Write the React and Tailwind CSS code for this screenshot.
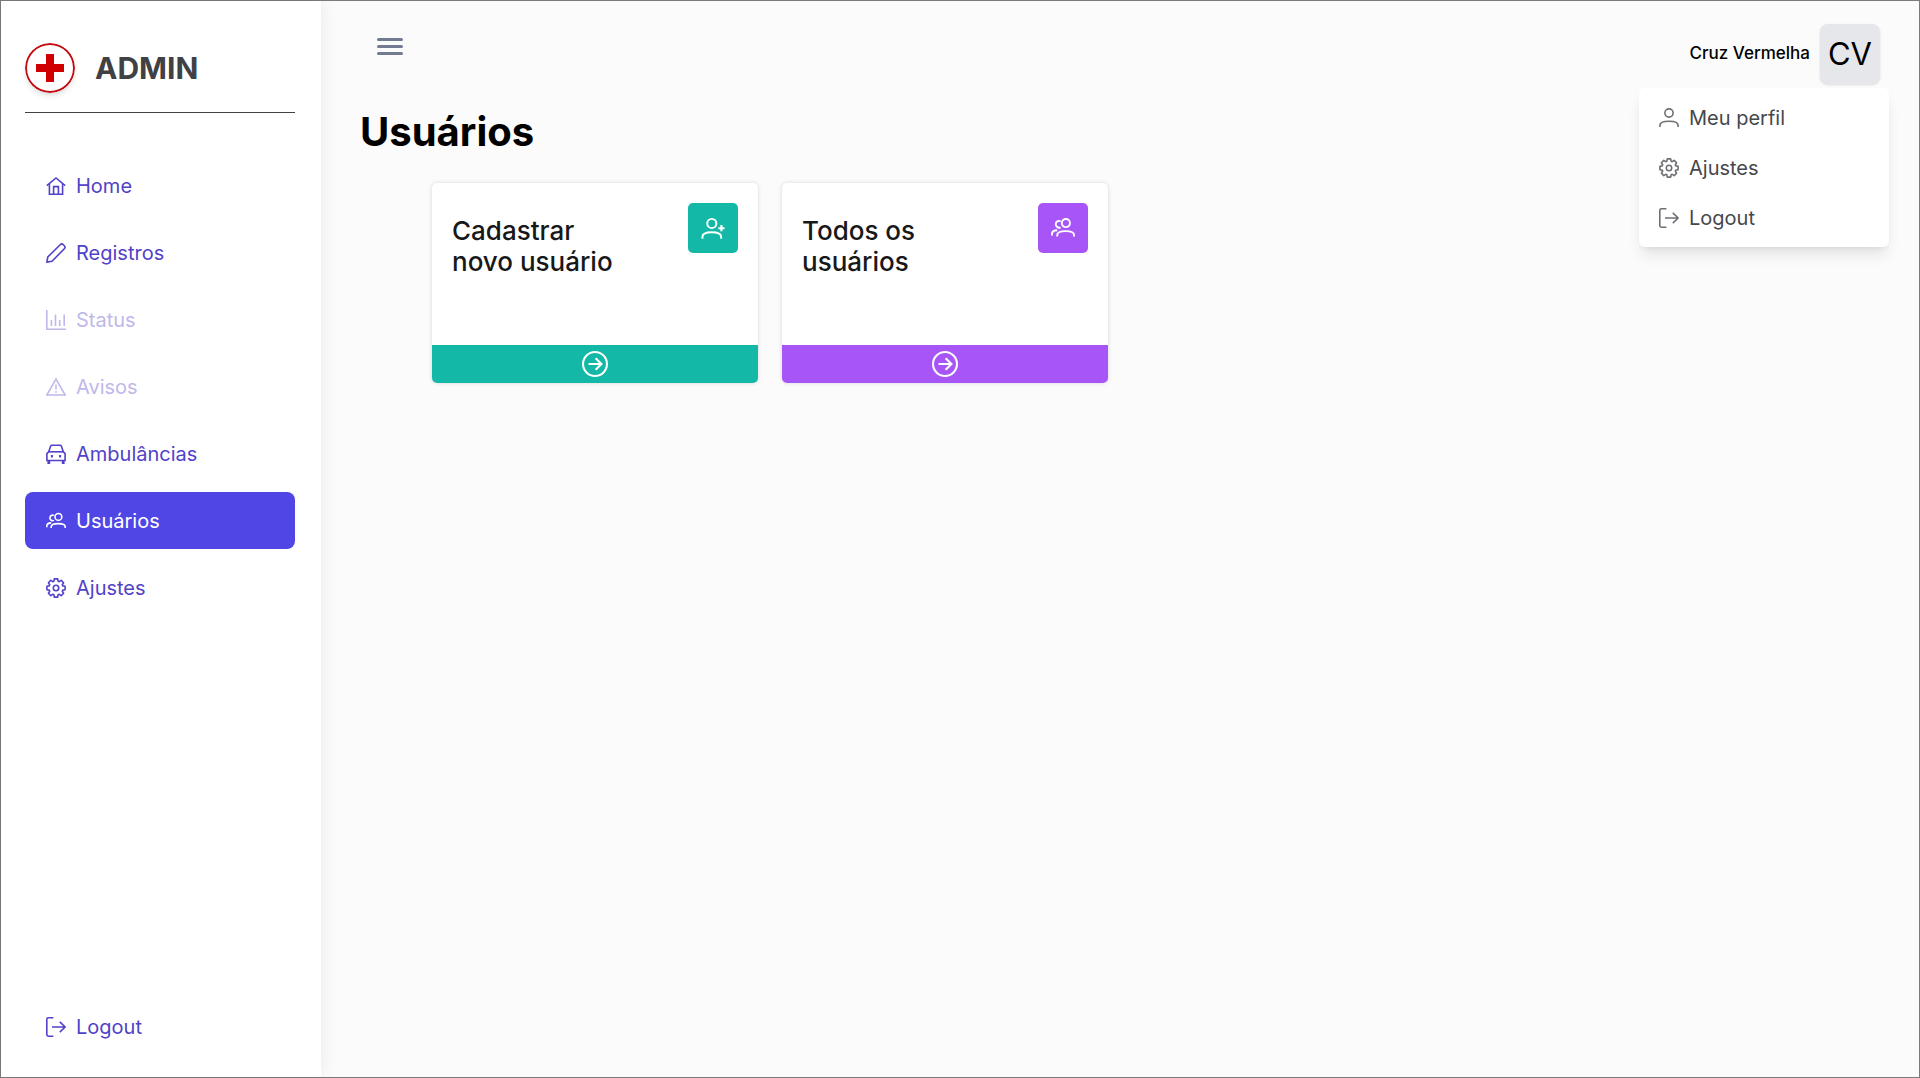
import React from "react";

const PATHS = {
  home: (
    <>
      <path d="M.8 9.600 10 2 19.200 9.600" />
      <path d="M3.4 8V18.200H16.600V8" />
      <path d="M7.600 18V10.600H12.400V18" />
    </>
  ),
  pencil: <path d="M14.200 1.700a2.200 2.200 0 0 1 3.100 0l1 1a2.200 2.200 0 0 1 0 3.100L6 18.200.9 19.100 1.800 14z" />,
  chart: (
    <>
      <path d="M.8 0V19.200H20" />
      <path d="M5.400 16V10M9.500 16V4.600M13.700 16V10M18.200 16V4.600" />
    </>
  ),
  warning: (
    <>
      <path d="M10 2.200 19.200 18H.8z" />
      <path d="M10 7.600V12.600M10 14.200V15.800" />
    </>
  ),
  car: (
    <>
      <path d="M.9 16.500V9.600L2.700 7.800 4.700 2Q4.900 1.300 5.700 1.300H14.300Q15.100 1.300 15.300 2L17.300 7.800 19.100 9.600V16.500z" />
      <path d="M2.700 7.800H17.300" />
      <path d="M2.800 16.500V20M17.200 16.500V20" strokeWidth="2.800" />
      <path d="M4.900 12.300H6.900M13.100 12.300H15.100" strokeWidth="2.400" />
    </>
  ),
  users: (
    <>
      <circle cx="12.400" cy="5.900" r="3.400" />
      <path d="M8 4.400A2.800 2.800 0 1 0 8 9.400" />
      <path d="M5.200 17V15.800C5.200 13.400 8 12.600 12.200 12.600S19.200 13.400 19.200 15.800V17" />
      <path d="M.8 16.200V15.200C.8 13 2.300 11.900 5.200 11.900" />
    </>
  ),
  user: (
    <>
      <circle cx="10" cy="5" r="4.100" />
      <path d="M.9 19V17.400C.9 14.400 4 13.200 10 13.200S19.100 14.400 19.100 17.400V19" />
    </>
  ),
  userPlus: (
    <>
      <circle cx="9" cy="6.200" r="3.800" />
      <path d="M1.200 19V17.400C1.200 14.600 4 13.600 9 13.600S16.800 14.600 16.800 17.400V19" />
      <path d="M17 7.600V12.800M14.400 10.200H19.600" strokeWidth="1.800" />
    </>
  ),
  gear: (
    <>
      <path
        strokeLinejoin="round"
        d="M8.300.9h3.400l.4 2.300 1.200.5 1.900-1.300 2.400 2.400-1.300 1.900.5 1.200 2.300.4v3.400l-2.300.4-.5 1.200 1.300 1.900-2.400 2.400-1.900-1.300-1.200.5-.4 2.300H8.300l-.4-2.300-1.200-.5-1.900 1.300-2.400-2.400 1.300-1.900-.5-1.200-2.300-.4V8.300l2.300-.4.5-1.200-1.300-1.900 2.400-2.400 1.900 1.300 1.200-.5z"
      />
      <circle cx="10" cy="10" r="2.700" />
    </>
  ),
  logout: (
    <>
      <path d="M7.400.8H2.400Q.8.8.8 2.400V17.600Q.8 19.200 2.400 19.200H7.400" />
      <path d="M6 10H19M13.800 4.800 19.200 10 13.800 15.200" />
    </>
  ),
  arrow: (
    <>
      <circle cx="10" cy="10" r="9.200" />
      <path d="M5 10H15M10.500 5.500 15 10 10.500 14.500" />
    </>
  ),
};

function Icon({ name, className = "size-5", width = 1.6 }) {
  return (
    <svg viewBox="0 0 20 20" fill="none" stroke="currentColor" strokeWidth={width} className={className + " shrink-0"} aria-hidden="true">
      {PATHS[name]}
    </svg>
  );
}

const NAV = [
  { icon: "home", label: "Home" },
  { icon: "pencil", label: "Registros" },
  { icon: "chart", label: "Status", disabled: true },
  { icon: "warning", label: "Avisos", disabled: true },
  { icon: "car", label: "Ambulâncias" },
  { icon: "users", label: "Usuários", active: true },
  { icon: "gear", label: "Ajustes" },
];

const MENU = [
  { icon: "user", label: "Meu perfil" },
  { icon: "gear", label: "Ajustes" },
  { icon: "logout", label: "Logout" },
];

function NavItem({ icon, label, disabled, active }) {
  const tone = active ? "bg-[#4f46e5] text-white" : disabled ? "text-[#c0b8ea]" : "text-[#5142c9]";
  return (
    <a
      href="#"
      aria-disabled={disabled}
      aria-current={active ? "page" : undefined}
      className={"flex h-[57px] items-center gap-[10px] rounded-lg px-[21px] text-xl " + tone}
    >
      <Icon name={icon} />
      {label}
    </a>
  );
}

function Card({ lines, icon, color }) {
  return (
    <article className="flex h-[200px] w-[326px] flex-col overflow-hidden rounded-[5px] bg-white shadow-[0_0_4px_rgba(0,0,0,0.15)]">
      <div className="flex flex-1 items-start justify-between p-5">
        <h2 className="pt-3 text-[26px] leading-[31px] font-medium text-[#17181a]">
          {lines[0]}
          <br />
          {lines[1]}
        </h2>
        <span className={"flex size-[50px] items-center justify-center rounded-[5px] text-white " + color}>
          <Icon name={icon} className="size-6" />
        </span>
      </div>
      <button type="button" aria-label={lines.join(" ")} className={"flex h-[38px] items-center justify-center text-white " + color}>
        <Icon name="arrow" className="size-[26px]" />
      </button>
    </article>
  );
}

export default function App() {
  return (
    <div className="flex min-h-screen border border-[#7d7a7d] bg-[#fbfbfb] font-['Inter',sans-serif] text-black">
      <aside className="z-10 flex w-80 shrink-0 flex-col bg-white pt-[42px] pr-[26px] pb-[22px] pl-6 shadow-[0_0_16px_rgba(0,0,0,0.08)]">
        <div className="flex items-center gap-5 border-b border-[#404145] pb-[19px]">
          <svg viewBox="0 0 50 50" className="size-[50px] rounded-full shadow-md" role="img" aria-label="Cruz Vermelha">
            <circle cx="25" cy="25" r="24" fill="#fff" stroke="#c20c12" strokeWidth="2" />
            <path d="M21 11h8v10h10v8H29v10h-8V29H11v-8h10z" fill="#d00000" />
          </svg>
          <span className="text-[30px] leading-10 font-bold text-[#404145]">ADMIN</span>
        </div>
        <nav className="mt-11 flex flex-1 flex-col gap-[10px]">
          {NAV.map((item) => (
            <NavItem key={item.label} {...item} />
          ))}
        </nav>
        <NavItem icon="logout" label="Logout" />
      </aside>

      <main className="min-w-0 flex-1 pt-[23px] pr-[39px] pl-[39px]">
        <header className="flex h-[60px] items-start justify-between">
          <button type="button" aria-label="Menu" className="mt-[14px] ml-[17px] flex w-[26px] flex-col gap-1">
            <span className="h-[3px] w-full rounded bg-[#727b92]" />
            <span className="h-[3px] w-full rounded bg-[#727b92]" />
            <span className="h-[3px] w-full rounded bg-[#727b92]" />
          </button>
          <div className="relative flex items-center gap-[10px]">
            <span className="text-[17px] font-medium">Cruz Vermelha</span>
            <button type="button" className="size-[60px] rounded-lg bg-gray-200 text-[31px] shadow">CV</button>
            <div className="absolute top-16 -right-[9px] flex w-[250px] flex-col rounded-md bg-white pt-[5px] pb-1 text-xl text-[#46474b] shadow-lg">
              {MENU.map(({ icon, label }) => (
                <a key={label} href="#" className="flex h-[50px] items-center gap-[10px] px-5">
                  <span className="text-[#6f7074]">
                    <Icon name={icon} />
                  </span>
                  {label}
                </a>
              ))}
            </div>
          </div>
        </header>
        <h1 className="mt-[23px] text-[40px] leading-[50px] font-bold">Usuários</h1>
        <section className="mt-[26px] flex flex-wrap gap-6 pl-[72px]">
          <Card lines={["Cadastrar", "novo usuário"]} icon="userPlus" color="bg-[#14b8a6]" />
          <Card lines={["Todos os", "usuários"]} icon="users" color="bg-[#a855f7]" />
        </section>
      </main>
    </div>
  );
}
